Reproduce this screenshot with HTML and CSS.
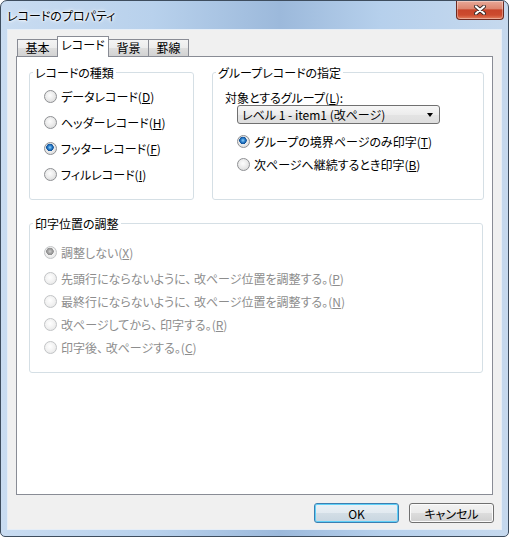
FILE: index.html
```html
<!DOCTYPE html>
<html lang="ja">
<head>
    <meta charset="UTF-8">
    <meta name="viewport" content="width=device-width, initial-scale=1.0">
    <title>レコードのプロパティ</title>
    <link rel="stylesheet" href="styles.css">
</head>
<body>
    <div class="window">
        <div class="titlebar">
            <span class="title">レコードのプロパティ</span>
            <button class="close" aria-label="閉じる">
                <svg width="12" height="10" viewBox="0 0 12 10">
                    <path d="M2 1.5 L10 8.5 M10 1.5 L2 8.5" stroke="#3a2a28" stroke-width="4" stroke-linecap="round"/>
                    <path d="M2 1.5 L10 8.5 M10 1.5 L2 8.5" stroke="#fff" stroke-width="2.2" stroke-linecap="round"/>
                </svg>
            </button>
        </div>

        <div class="client">
            <div class="tabs">
                <div class="tab">基本</div>
                <div class="tab active">レコード</div>
                <div class="tab">背景</div>
                <div class="tab">罫線</div>
            </div>

            <div class="panel">
                <div class="row">
                    <fieldset class="group kind">
                        <legend>レコードの種類</legend>
                        <div class="body">
                            <div class="opt"><span class="radio"></span><span>データレコード(<u>D</u>)</span></div>
                            <div class="opt"><span class="radio"></span><span>ヘッダーレコード(<u>H</u>)</span></div>
                            <div class="opt"><span class="radio checked"></span><span>フッターレコード(<u>F</u>)</span></div>
                            <div class="opt"><span class="radio"></span><span>フィルレコード(<u>I</u>)</span></div>
                        </div>
                    </fieldset>

                    <fieldset class="group target">
                        <legend>グループレコードの指定</legend>
                        <div class="body">
                            <div class="field-label">対象とするグループ(<u>L</u>):</div>
                            <div class="select">
                                <span>レベル 1 - item1 (改ページ)</span>
                                <span class="arrow"></span>
                            </div>
                            <div class="sub-opts">
                                <div class="opt short"><span class="radio checked"></span><span>グループの境界ページのみ印字(<u>T</u>)</span></div>
                                <div class="opt short"><span class="radio"></span><span>次ページへ継続するとき印字(<u>B</u>)</span></div>
                            </div>
                        </div>
                    </fieldset>
                </div>

                <fieldset class="group adjust">
                    <legend>印字位置の調整</legend>
                    <div class="body">
                        <div class="opt short first disabled"><span class="radio checked"></span><span>調整しない(<u>X</u>)</span></div>
                        <div class="opt short disabled"><span class="radio"></span><span>先頭行にならないように、 改ページ位置を調整する。(<u>P</u>)</span></div>
                        <div class="opt short disabled"><span class="radio"></span><span>最終行にならないように、 改ページ位置を調整する。(<u>N</u>)</span></div>
                        <div class="opt short disabled"><span class="radio"></span><span>改ページしてから、 印字する。(<u>R</u>)</span></div>
                        <div class="opt short disabled"><span class="radio"></span><span>印字後、 改ページする。(<u>C</u>)</span></div>
                    </div>
                </fieldset>
            </div>

            <div class="buttons">
                <button class="btn default">OK</button>
                <button class="btn">キャンセル</button>
            </div>
        </div>
    </div>
</body>
</html>
```

FILE: styles.css
```css
*{
    box-sizing: border-box;
}
body{
    margin: 0;
    background-color: #fff;
    font-family: "Noto Sans CJK JP", "Liberation Sans", sans-serif;
    font-size: 12px;
    line-height: 15px;
    color: #000;
    font-feature-settings: "palt";
}
u{
    text-underline-offset: 1px;
}

/* window frame */
.window{
    width: 509px;
    height: 537px;
    border: 1px solid #3e4d5e;
    border-radius: 7px 7px 5px 5px;
    background: linear-gradient(to right, #c9dcf1 0%, #b8d1ec 30%, #9cb9db 55%, #b6d0ec 75%, #c6d9ee 100%);
    display: flex;
    flex-direction: column;
    overflow: hidden;
}
.titlebar{
    height: 28px;
    display: flex;
    justify-content: space-between;
    align-items: flex-start;
    padding-left: 6px;
}
.title{
    margin-top: 7px;
    text-shadow: 0 0 5px #fff, 0 0 3px #fff, 0 0 2px #fff;
}
.close{
    width: 48px;
    height: 19px;
    margin-right: 4px;
    padding: 0;
    border: 1px solid #6e2a20;
    border-top: none;
    border-radius: 0 0 4px 4px;
    background: linear-gradient(#e8a898 0%, #dd8670 42%, #c8452b 50%, #cc4b2f 78%, #e4805f 100%);
    box-shadow: inset 0 0 0 1px rgba(255,255,255,0.35);
    display: flex;
    align-items: center;
    justify-content: center;
}

.client{
    flex: 1;
    margin: 0 6px 6px 6px;
    border: 1px solid #e6eef7;
    background-color: #f0f0f0;
    display: flex;
    flex-direction: column;
    padding: 6px 7px 6px 8px;
}

/* tabs */
.tabs{
    display: flex;
    align-items: flex-end;
    height: 21px;
    padding-left: 1px;
}
.tab{
    width: 41px;
    height: 18px;
    margin-left: -1px;
    border: 1px solid #898c95;
    background: linear-gradient(#f4f4f4, #ececec 50%, #dedede 50%, #d2d2d2);
    text-align: center;
    line-height: 16px;
}
.tab:first-child{
    margin-left: 0;
}
.tab.active{
    width: 52px;
    height: 21px;
    border-bottom: none;
    background: #fff;
    position: relative;
    z-index: 1;
    line-height: 15px;
}

.panel{
    flex: 1;
    margin-top: -1px;
    margin-right: 1px;
    border: 1px solid #898c95;
    background-color: #fff;
    padding: 8px 8px 0 12px;
}
.row{
    display: flex;
    gap: 18px;
}

/* group boxes */
.group{
    margin: 0;
    padding: 0;
    min-width: 0;
    border: 1px solid #d5dfe5;
    border-radius: 3px;
}
.group legend{
    margin-left: 3px;
    padding: 0 2px;
    line-height: 15px;
}
.kind{
    width: 165px;
    height: 135px;
}
.kind .body{
    padding: 3px 0 0 14px;
}
.target{
    width: 272px;
    height: 135px;
}
.target .body{
    padding: 10px 0 0 12px;
}
.adjust{
    width: 454px;
    height: 157px;
    margin-top: 16px;
}
.adjust .body{
    padding: 10px 0 0 14px;
}

.opt{
    display: flex;
    align-items: center;
    gap: 4px;
    height: 26px;
    white-space: nowrap;
}
.opt.short{
    height: 23px;
}
.opt.first{
    margin-bottom: 3px;
}
.opt.disabled{
    color: #8d8d8d;
}

.radio{
    flex: none;
    width: 13px;
    height: 13px;
    border-radius: 50%;
    border: 1px solid #8e9093;
    background: radial-gradient(circle at 45% 40%, #fdfdfd 0, #ececec 45%, #d4d4d4 100%);
}
.radio.checked{
    background:
        radial-gradient(circle at 45% 40%, #8fd3fa 0, #2c7fcc 2px, #0f4f95 3.5px, rgba(0,0,0,0) 4px),
        radial-gradient(circle at 45% 40%, #fdfdfd 0, #ececec 45%, #d4d4d4 100%);
}
.disabled .radio{
    border-color: #c2c4c6;
    background: radial-gradient(circle at 45% 40%, #ffffff 0, #f2f2f2 50%, #e2e2e2 100%);
}
.disabled .radio.checked{
    background:
        radial-gradient(circle at 45% 40%, #d0d0d0 0, #a4a4a4 2px, #8c8c8c 3.5px, rgba(0,0,0,0) 4px),
        radial-gradient(circle at 45% 40%, #ffffff 0, #f2f2f2 50%, #e2e2e2 100%);
}

.field-label{
    margin-top: 0;
}
.select{
    margin-left: 12px;
    width: 203px;
    height: 19px;
    border: 1px solid #707070;
    border-radius: 3px;
    background: linear-gradient(#f6f6f6, #ececec 50%, #e4e4e4 50%, #dedede);
    display: flex;
    align-items: center;
    justify-content: space-between;
    padding: 0 6px 0 4px;
}
.arrow{
    width: 0;
    height: 0;
    border-left: 3.5px solid transparent;
    border-right: 3.5px solid transparent;
    border-top: 4px solid #000;
}
.sub-opts{
    margin-top: 6px;
    margin-left: 12px;
}

/* dialog buttons */
.buttons{
    display: flex;
    justify-content: flex-end;
    gap: 10px;
    margin-top: 8px;
}
.btn{
    width: 85px;
    height: 20px;
    padding: 0;
    border: 1px solid #707070;
    border-radius: 3px;
    background: linear-gradient(#f2f2f2, #ebebeb 50%, #dddddd 50%, #cfcfcf);
    box-shadow: inset 0 0 0 1px #fbfbfb;
    font: inherit;
    font-feature-settings: "palt";
    color: #000;
}
.btn.default{
    border-color: #3c7fb1;
    background: linear-gradient(#eaf1f6, #e2eaf0 50%, #d3dee6 50%, #c8d6e0);
    box-shadow: inset 0 0 0 1px #5fd0f8;
}
```
